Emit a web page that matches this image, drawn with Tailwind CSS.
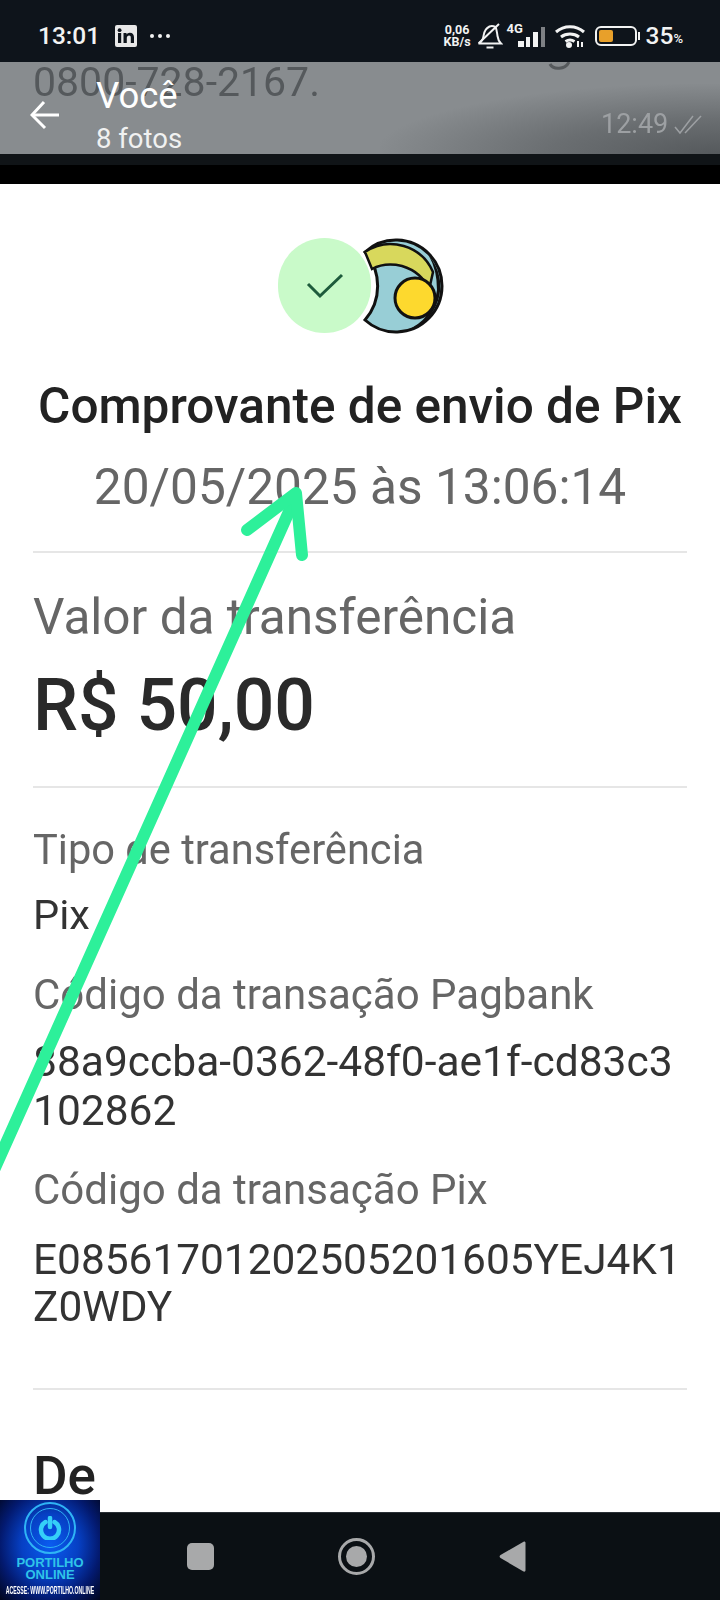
<!DOCTYPE html>
<html lang="pt-BR">
<head>
  <meta charset="UTF-8">
  <title>Comprovante de envio de Pix</title>
  <script src="https://cdn.jsdelivr.net/npm/@tailwindcss/browser@4"></script>
</head>
<body class="bg-white font-['Roboto',sans-serif]">
  <div class="relative w-[720px] h-[1600px] overflow-hidden flex flex-col">

    <!-- status bar -->
    <div class="h-[62px] shrink-0 bg-[#0e141b] flex items-center pl-[38px] pr-[37px] pt-[10px] text-[#f2f3f3]">
      <span class="text-[24.500px] font-medium">13:01</span>
      <span class="ml-[15px] w-[22px] h-[22px] bg-[#e8e8e8] rounded-[2px] flex items-center justify-center">
        <svg width="18" height="16" viewBox="0 0 18 16" fill="#0e141b"><rect x="1" y="5" width="3.200" height="10"/><circle cx="2.600" cy="2.200" r="1.900"/><path d="M6.500 5h3v1.500c.7-1.100 1.900-1.800 3.300-1.800 2.800 0 4.200 1.700 4.200 4.600V15h-3.200V9.800c0-1.400-.5-2.300-1.700-2.300-1.300 0-2.300.9-2.300 2.400V15H6.500z"/></svg>
      </span>
      <span class="ml-[13px] flex gap-[4px]">
        <span class="w-[4px] h-[4px] rounded-full bg-[#f2f3f3]"></span>
        <span class="w-[4px] h-[4px] rounded-full bg-[#f2f3f3]"></span>
        <span class="w-[4px] h-[4px] rounded-full bg-[#f2f3f3]"></span>
      </span>
      <div class="ml-auto flex items-center">
        <span class="flex flex-col items-center text-[12.500px] leading-[12px] font-bold"><span>0,06</span><span>KB/s</span></span>
        <svg class="ml-[6px]" width="26" height="26" viewBox="0 0 26 26" fill="none" stroke="#f2f3f3" stroke-width="2"><path d="M1.500 20.500c3-1.500 4.500-3.500 5-7.500.6-5 3-8 6-9.500 2.500-1 4-.5 6 .5 1.500 3 1.500 6 2 9 .4 3 1.500 5.500 3.500 7.500z"/><path d="M9.500 24.500h7"/><path d="M2 20 22 1"/></svg>
        <span class="ml-[4px] relative w-[40px] h-[24px]">
          <span class="absolute left-0 top-[-2px] text-[13px] leading-[13px] font-bold">4G</span>
          <svg class="absolute left-[9px] top-0" width="31" height="24" viewBox="0 0 31 24" fill="#f2f3f3"><rect x="2" y="17" width="6" height="6"/><rect x="10" y="13" width="4" height="10"/><rect x="17" y="8" width="5" height="15"/><rect x="25" y="3" width="4" height="20" fill="#7d8084"/></svg>
        </span>
        <svg class="ml-[7px]" width="32" height="24" viewBox="0 0 32 24" fill="none" stroke="#f2f3f3" stroke-width="3"><path d="M2 8c8-7 20-7 28 0"/><path d="M7 13c5-4 13-4 18 0"/><path d="M11.500 17.500c3-2 6-2 9 0"/><circle cx="15" cy="21" r="1.500" fill="#f2f3f3"/><path d="M24 17v6M28 18v5" stroke-width="2"/></svg>
        <span class="ml-[9px] w-[42px] h-[20px] border-2 border-[#f2f3f3] rounded-[6px] p-[2px]">
          <span class="block w-[14px] h-full bg-[#e8a02a] rounded-[2px]"></span>
        </span>
        <span class="ml-[1px] w-[2px] h-[8px] bg-[#f2f3f3]"></span>
        <span class="ml-[6px] text-[24.500px] font-medium">35</span><span class="text-[13px] font-medium mt-[6px]">%</span>
      </div>
    </div>

    <!-- blurred chat header -->
    <div class="relative h-[92px] shrink-0 overflow-hidden bg-[#888c8f] text-white">
      <span class="absolute left-[33px] top-[-4px] text-[41px] leading-[48px] text-[#55595c] blur-[0.6px]">0800-728-2167.</span>
      <svg class="absolute left-[548px] top-0 blur-[0.6px]" width="24" height="12" viewBox="0 0 24 12" fill="none" stroke="#55595c" stroke-width="3"><path d="M2 2c3 6 15 6 19-2"/></svg>
      <div class="absolute right-0 bottom-0 w-[340px] h-[70px] bg-[radial-gradient(ellipse_at_bottom_right,#55595c_0%,#6a6e71_35%,transparent_72%)]"></div>
      <svg class="absolute left-[30px] top-[38px]" width="30" height="30" viewBox="0 0 30 30" fill="none" stroke="#fff" stroke-width="3"><path d="M29 15H2"/><path d="M14 2 2 15l13 13"/></svg>
      <span class="absolute left-[96px] top-[14px] text-[36.500px] leading-[40px]">Você</span>
      <span class="absolute left-[96px] top-[62px] text-[27.500px] leading-[30px] text-[#f0f1f1]">8 fotos</span>
      <span class="absolute left-[601px] top-[47px] text-[27px] leading-[30px] text-[#9da0a3] blur-[0.5px]">12:49</span>
      <svg class="absolute left-[674px] top-[52px]" width="28" height="22" viewBox="0 0 28 22" fill="none" stroke="#9da0a3" stroke-width="1.500"><path d="M1 13l5 6L19 2"/><path d="M11 19 27 2"/></svg>
    </div>
    <div class="h-[11px] shrink-0 bg-[#101417]"></div>
    <div class="h-[19px] shrink-0 bg-black"></div>

    <!-- receipt -->
    <div class="flex-1 overflow-hidden px-[33px] text-[#333]">
      <div class="flex flex-col items-center">
        <div class="mt-[54px] h-[96px] relative w-[170px]">
          <svg class="absolute left-0 top-0" width="170" height="96" viewBox="278 238 170 96" fill="none">
            <path d="M368 252A46 46 0 1 1 368 320A52 52 0 0 0 368 252Z" fill="#98ced6" stroke="#111" stroke-width="3"/>
            <path d="M368 252A46 46 0 0 1 436 272L432 290Q425 272 405 266Q388 262 375 269Z" fill="#d8d85c" stroke="#111" stroke-width="2.500"/>
            <path d="M432 256A46 46 0 0 1 408 331Q436 320 440 290Q440 270 432 256Z" fill="#111"/>
            <circle cx="418" cy="298" r="20" fill="#fdd92e" stroke="#111" stroke-width="3"/>
          </svg>
          <div class="absolute left-[3px] top-0 w-[93px] h-[95px] rounded-full bg-[#c9fac9] flex items-center justify-center">
            <svg width="38" height="28" viewBox="0 0 38 28" fill="none" stroke="#1e5b3c" stroke-width="3"><path d="M2 12l12 12L36 3"/></svg>
          </div>
        </div>
        <h1 class="mt-[44px] text-[49.500px] leading-[56px] font-medium text-[#222] whitespace-nowrap blur-[0.4px]">Comprovante de envio de Pix</h1>
        <p class="mt-[25px] text-[49.600px] leading-[56px] text-[#666] whitespace-nowrap blur-[0.4px]">20/05/2025 às 13:06:14</p>
      </div>
      <div class="mt-[36px] h-[2px] bg-[#e6e6e6]"></div>
      <p class="mt-[36px] text-[49.500px] leading-[56px] text-[#666] blur-[0.4px]">Valor da transferência</p>
      <p class="mt-[21px] text-[71.500px] leading-[80px] font-medium text-[#2a2a2a] blur-[0.4px]">R$ 50,00</p>
      <div class="mt-[40px] h-[2px] bg-[#e6e6e6]"></div>
      <p class="mt-[38px] text-[41.600px] leading-[48px] text-[#666] blur-[0.4px]">Tipo de transferência</p>
      <p class="mt-[17px] text-[41.500px] leading-[48px] text-[#333] blur-[0.4px]">Pix</p>
      <p class="mt-[32px] text-[42px] leading-[48px] text-[#666] blur-[0.4px]">Código da transação Pagbank</p>
      <p class="mt-[18px] text-[42.500px] leading-[49px] text-[#333] whitespace-nowrap blur-[0.4px]">88a9ccba-0362-48f0-ae1f-cd83c3<br>102862</p>
      <p class="mt-[31px] text-[42px] leading-[48px] text-[#666] blur-[0.4px]">Código da transação Pix</p>
      <p class="mt-[22px] text-[42.400px] leading-[47px] text-[#333] whitespace-nowrap blur-[0.4px]">E08561701202505201605YEJ4K1<br>Z0WDY</p>
      <div class="mt-[58px] h-[2px] bg-[#e6e6e6]"></div>
      <p class="mt-[56px] text-[53px] leading-[60px] font-medium text-[#222] blur-[0.4px]">De</p>
    </div>

    <!-- nav bar -->
    <div class="h-[88px] shrink-0 bg-[#0b1014] border-t border-[#2a3036] relative">
      <span class="absolute left-[187px] top-[30px] w-[27px] h-[27px] rounded-[5px] bg-[#a8a9aa]"></span>
      <span class="absolute left-[338px] top-[25px] w-[37px] h-[37px] rounded-full border-[3px] border-[#a8a9aa] flex items-center justify-center">
        <span class="w-[21px] h-[21px] rounded-full bg-[#a8a9aa]"></span>
      </span>
      <svg class="absolute left-[499px] top-[27px]" width="27" height="33" viewBox="0 0 27 33" fill="#a8a9aa"><path d="M25 1.500c1 0 1.500.5 1.500 1.500v27c0 1.200-.8 2-2 1.500L1.500 18c-1.200-.8-1.200-2.200 0-3z"/></svg>
    </div>

    <!-- arrow annotation drawn over the receipt -->
    <svg class="absolute left-0 top-0 pointer-events-none" width="720" height="1600" viewBox="0 0 720 1600" fill="none" stroke="#2df09a" stroke-width="12" stroke-linecap="round" stroke-linejoin="round">
      <path d="M-6 1170 296 496"/>
      <path d="M247 530 296 493 302 555"/>
    </svg>

    <!-- watermark -->
    <div class="absolute left-0 bottom-0 w-[100px] h-[100px] bg-[radial-gradient(ellipse_at_50%_45%,#0a5cf0_0%,#0640c4_40%,#031a70_70%,#01051c_100%)] flex flex-col items-center overflow-hidden">
      <div class="mt-[2px] w-[52px] h-[52px] rounded-full border-2 border-[#2fb4f5] flex items-center justify-center">
        <div class="w-[40px] h-[40px] rounded-full border border-[#2fb4f5] flex items-center justify-center">
          <svg width="24" height="24" viewBox="0 0 24 24" fill="none" stroke="#35d0f8" stroke-width="4.500" stroke-linecap="round"><path d="M7.500 6a9 9 0 1 0 9 0"/><path d="M12 2v9"/></svg>
        </div>
      </div>
      <span class="mt-[3px] font-['Liberation_Sans',sans-serif] text-[13px] leading-[12px] font-bold text-[#2fc4e8]">PORTILHO</span>
      <span class="font-['Liberation_Sans',sans-serif] text-[13px] leading-[12px] font-bold text-[#2fc4e8]">ONLINE</span>
      <span class="mt-[4px] w-[172px] shrink-0 text-center scale-x-[.52] font-['Liberation_Sans',sans-serif] text-[10px] leading-[12px] font-bold text-white whitespace-nowrap">ACESSE: WWW.PORTILHO.ONLINE</span>
    </div>
  </div>
</body>
</html>
